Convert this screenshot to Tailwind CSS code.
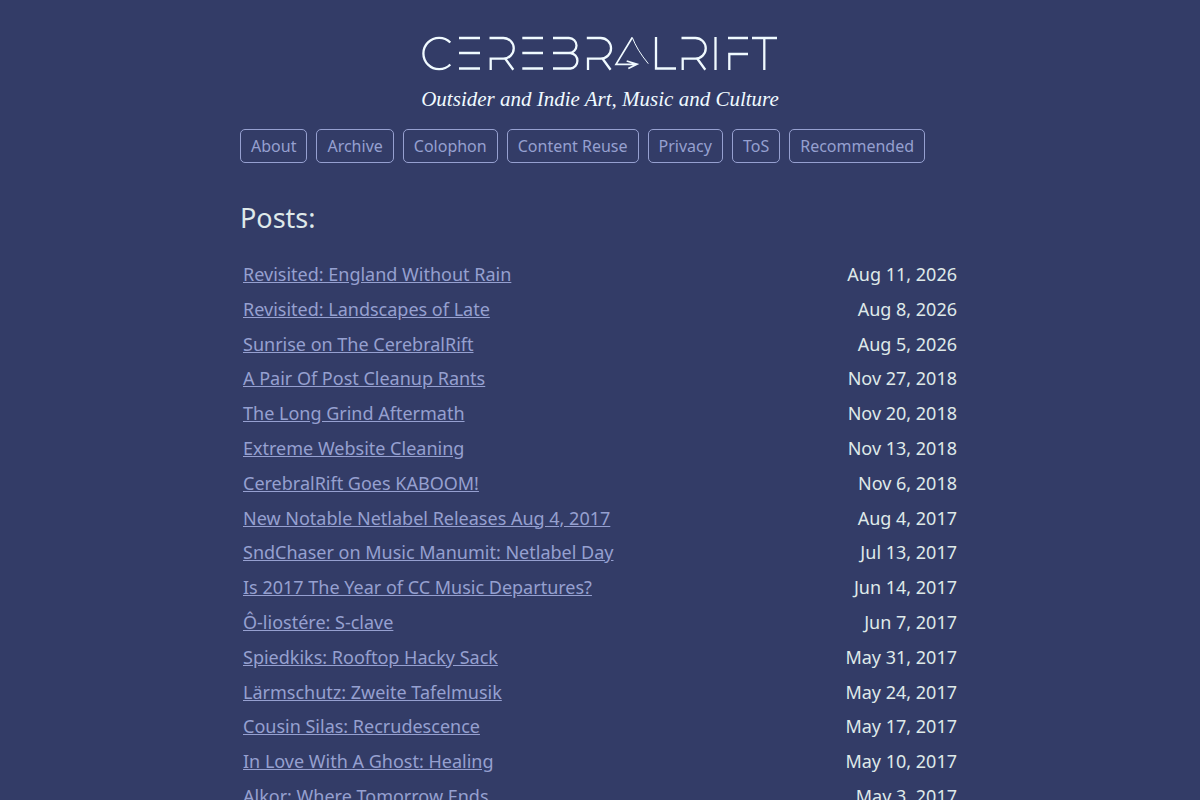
<!DOCTYPE html>
<html lang="en">
<head>
  <meta charset="UTF-8" />
  <meta name="viewport" content="width=device-width, initial-scale=1.0"/>
  <title>CerebralRift</title>
  <script src="https://cdn.jsdelivr.net/npm/@tailwindcss/browser@4"></script>
</head>
<body class="bg-[#333c67] text-[#dfe9e9] font-['Noto_Sans',sans-serif] text-lg leading-[1.6]">

  <div class="max-w-[720px] mx-auto pt-[34px]">
    <header>
      <a href="/" class="block w-[360px] mx-auto text-[#f0faff]">
        <svg viewBox="0 0 360 40" class="block w-full" fill="none" stroke="currentColor" stroke-width="2.3" role="img" aria-label="CerebralRift">
          <path d="M30.3 8.5A15.7 15.7 0 1 0 30.3 30.5" />
          <path d="M39 4H60M39 19H60M39 34.5H60" />
          <path d="M69.5 4H83.4A10.3 10.3 0 0 1 83.4 24.7H70.7V36M85.5 25L93.3 35.7" />
          <path d="M102.3 4H123M102.3 19H123M102.3 34.5H123" />
          <path d="M133 4H149A7.5 7.5 0 0 1 149 19H133M149 19H150.5A7.8 7.8 0 0 1 150.5 34.5H133" />
          <path d="M166.8 4H180.7A10.3 10.3 0 0 1 180.7 24.7H168V36M182.8 25L190.6 35.7" />
          <path d="M212.3 3.5L196 30.3H216M206.7 27L217 30.2L208.3 34.5" stroke-width="1.7" />
          <path d="M212.3 3.5Q217 16 228.3 29.7" stroke-width="1" />
          <path d="M236 3V34.5H256" />
          <path d="M261.5 4H275.4A10.3 10.3 0 0 1 275.4 24.7H262.7V36M277.5 25L285.3 35.7" />
          <path d="M295.5 3V36" />
          <path d="M308 4H328M328 20H309.3V36" />
          <path d="M332 4H357M344.3 4V36" />
        </svg>
        <p class="mt-[11px] text-center whitespace-nowrap font-['Liberation_Serif',serif] italic text-[21px] leading-[28px]">Outsider and Indie Art, Music and Culture</p>
      </a>
      <nav class="mt-4 flex flex-wrap gap-[9px] text-base leading-[26px] text-[#96a0d0]">
        <a href="#" class="border rounded-[5px] px-[10px] py-[3px]">About</a>
        <a href="#" class="border rounded-[5px] px-[10px] py-[3px]">Archive</a>
        <a href="#" class="border rounded-[5px] px-[10px] py-[3px]">Colophon</a>
        <a href="#" class="border rounded-[5px] px-[10px] py-[3px]">Content Reuse</a>
        <a href="#" class="border rounded-[5px] px-[10px] py-[3px]">Privacy</a>
        <a href="#" class="border rounded-[5px] px-[10px] py-[3px]">ToS</a>
        <a href="#" class="border rounded-[5px] px-[10px] py-[3px]">Recommended</a>
      </nav>
    </header>

    <main>
      <h2 class="mt-[38px] mb-[22px] text-[27px] leading-[34px]">Posts:</h2>
      <table class="w-full" id="postsTable">
        <tbody></tbody>
      </table>
    </main>
  </div>

<script>
  const posts = [
    ['Revisited: England Without Rain', 'Aug 11, 2026'],
    ['Revisited: Landscapes of Late', 'Aug 8, 2026'],
    ['Sunrise on The CerebralRift', 'Aug 5, 2026'],
    ['A Pair Of Post Cleanup Rants', 'Nov 27, 2018'],
    ['The Long Grind Aftermath', 'Nov 20, 2018'],
    ['Extreme Website Cleaning', 'Nov 13, 2018'],
    ['CerebralRift Goes KABOOM!', 'Nov 6, 2018'],
    ['New Notable Netlabel Releases Aug 4, 2017', 'Aug 4, 2017'],
    ['SndChaser on Music Manumit: Netlabel Day', 'Jul 13, 2017'],
    ['Is 2017 The Year of CC Music Departures?', 'Jun 14, 2017'],
    ['Ô-liostére: S-clave', 'Jun 7, 2017'],
    ['Spiedkiks: Rooftop Hacky Sack', 'May 31, 2017'],
    ['Lärmschutz: Zweite Tafelmusik', 'May 24, 2017'],
    ['Cousin Silas: Recrudescence', 'May 17, 2017'],
    ['In Love With A Ghost: Healing', 'May 10, 2017'],
    ['Alkor: Where Tomorrow Ends', 'May 3, 2017']
  ];

  const tableBody = document.querySelector('#postsTable tbody');
  posts.forEach(([title, date]) => {
    const row = document.createElement('tr');
    row.innerHTML = `
      <td class="p-[3px]"><a href="#" class="underline text-[#96a0d0]">${title}</a></td>
      <td class="p-[3px] text-right whitespace-nowrap">${date}</td>
    `;
    tableBody.appendChild(row);
  });
</script>

</body>
</html>
